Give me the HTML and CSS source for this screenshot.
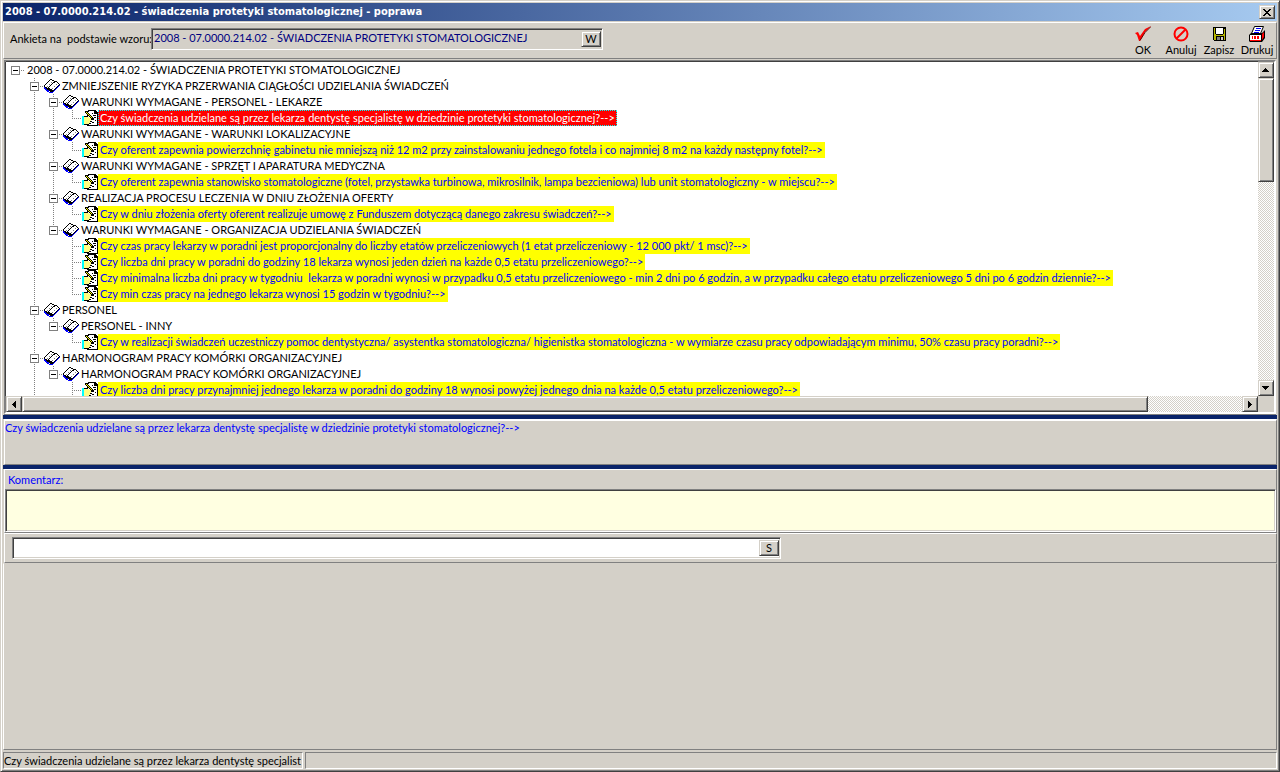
FILE: index.html
```html
<!DOCTYPE html>
<html lang="pl">
<head>
<meta charset="utf-8">
<title>2008 - 07.0000.214.02 - świadczenia protetyki stomatologicznej - poprawa</title>
<link rel="stylesheet" href="styles.css">
</head>
<body>
<svg class="sprites" aria-hidden="true">
  <symbol id="book" viewBox="0 0 16 16" shape-rendering="crispEdges">
    <path d="M0 9h1v1h1v1h1v1h2v2h3v-1h1v-1h1v-1h1v-1h1V9h1V8h1V7h2v1h-1v1h-1v1h-1v1h-1v1h-1v1h-1v1H9v1H5v-1H3v-1H2v-1H1v-1H0z" fill="#0000ff"/>
    <path d="M6 1h2v1h2v1h3v1h1v1h1v1h1v1h-1v1h-1v1h-1v1h-1v1h-1v1h-1v1H9v1H6v-1H5v-1H3v-1H2v-1H1V9H0V7h1V6h1V5h1V4h1V3h1V2h1z" fill="#000"/>
    <path d="M6 2h2v1h2v1H9v1H8v1H7v1H6v1H5v1H4v1H3V9H1V7h1V6h1V5h1V4h1V3h1zM11 4h2v1h1v1h1v1h-1v1h-1v1h-1v1h-1v1h-1v1H8v-1H6v-1H5v-1h1V8h1V7h1V6h1V5h2z" fill="#fff"/>
    <path d="M7 4h1v1H7zM5 6h1v1H5zM3 8h1v1H3zM12 6h1v1h-1zM10 8h1v1h-1zM8 10h1v1H8z" fill="#808080"/>
  </symbol>
  <symbol id="note" viewBox="0 0 16 16" shape-rendering="crispEdges">
    <path d="M6 0h8v1h1v1h1v14H5V1h1z" fill="#000"/>
    <path d="M7 1h5v3h3v11H6V2h1z" fill="#fff"/>
    <path d="M13 2h1v1h-1zM10 3h1v1h-1zM11 5h3v1h-3zM12 7h2v1h-2zM11 9h1v1h-1zM13 10h1v1h-1zM10 12h2v1h-2zM8 13h1v1H8z" fill="#000"/>
    <path d="M0 6h2v9H0z" fill="#00ffff"/>
    <path d="M2 7h5v1h2v4H8v2H2z" fill="#ffff80"/>
    <path d="M2 6h4v1H2zM9 9h2v1H9zM8 11h2v1H8zM7 13h2v1H7zM2 14h5v1H2z" fill="#000"/>
    <path d="M3 1h2v1h1v1h1v1h1v1h1v1h1v1h1v1h1v2h-2V9H9V8H8V7H7V6H6V5H5V4H4V3H3z" fill="#000"/>
    <path d="M4 2h1v1h1v1h1v1h1v1h1v1h1v1H9V7H8V6H7V5H6V4H5V3H4z" fill="#ffff00"/>
  </symbol>
</svg>

<main class="window">
  <header class="titlebar">
    <h1>2008 - 07.0000.214.02 - świadczenia protetyki stomatologicznej - poprawa</h1>
    <button class="btn close" aria-label="Zamknij"><svg width="8" height="7" viewBox="0 0 8 7" shape-rendering="crispEdges"><path d="M0 0h2v1h1v1h2V1h1V0h2v1H7v1H6v1H5v1h1v1h1v1h1v1H6V6H5V5H3v1H2v1H0V6h1V5h1V4h1V3H2V2H1V1H0z"/></svg></button>
  </header>

  <section class="toolbar">
    <label class="pattern-label" for="pattern">Ankieta na  podstawie wzoru:</label>
    <div class="field pattern">
      <input id="pattern" type="text" readonly value="2008 - 07.0000.214.02 - ŚWIADCZENIA PROTETYKI STOMATOLOGICZNEJ">
      <button class="btn">W</button>
    </div>
    <div class="actions">
      <button class="tool"><svg width="16" height="16" viewBox="0 0 16 16"><path d="M0 7l3-1 2 4 5-7 6-3-6 6-5 9H4L2 9z" fill="#f00"/><path d="M5 14.500l5-8 6-6" fill="none" stroke="#600" stroke-width="1"/></svg>OK</button>
      <button class="tool"><svg width="16" height="16" viewBox="0 0 16 16" fill="none" stroke="#f00" stroke-width="2"><circle cx="8" cy="8" r="6.500"/><path d="M3.500 12.500l9-9"/></svg>Anuluj</button>
      <button class="tool"><svg width="16" height="16" viewBox="0 0 16 16" shape-rendering="crispEdges"><path d="M2 1h13v14H3v-1H2z"/><path d="M3 2h11v12H3z" fill="#b8b800"/><path d="M5 2h7v6H5z" fill="#fff"/><path d="M12 2h1v6h-1zM4 2h1v6H4zM5 8h7v1H5zM13 2h1v1h-1z"/><path d="M5 10h8v5H5z"/><path d="M10 11h2v3h-2z" fill="#d4d0c8"/><path d="M6 11h3v3H6z" fill="#808080"/></svg>Zapisz</button>
      <button class="tool"><svg width="16" height="16" viewBox="0 0 16 16"><path d="M5.500.5h9l-3 7h-9z" fill="#fff" stroke="#000"/><path d="M7 2.500h5M6 4.500h5M5 6.500h5" stroke="#00f" stroke-width="1.200"/><path d="M0 9l2-2h11l3-3v8l-3 4H1l-1-1z"/><path d="M13 8l2-2v5l-2 3z" fill="#f00"/><path d="M1 9h11v5H1z" fill="#fff"/><path d="M3 10h1v3H3zM5 10h2v3H5zM8 10h2v3H8z" fill="#f00"/><path d="M1 14h11v1H1z" fill="#f00"/></svg>Drukuj</button>
    </div>
  </section>

  <section class="tree-box">
    <div class="tree-view">
      <ul class="tree">
        <li><div class="row"><button class="toggle" aria-label="Zwiń"></button><span class="label">2008 - 07.0000.214.02 - ŚWIADCZENIA PROTETYKI STOMATOLOGICZNEJ</span></div>
        <ul>
          <li><div class="row"><button class="toggle" aria-label="Zwiń"></button><svg class="icon"><use href="#book"/></svg><span class="label">ZMNIEJSZENIE RYZYKA PRZERWANIA CIĄGŁOŚCI UDZIELANIA ŚWIADCZEŃ</span></div>
          <ul>
            <li><div class="row"><button class="toggle" aria-label="Zwiń"></button><svg class="icon"><use href="#book"/></svg><span class="label">WARUNKI WYMAGANE - PERSONEL - LEKARZE</span></div>
              <ul><li><div class="row leaf"><svg class="icon"><use href="#note"/></svg><span class="label question selected">Czy świadczenia udzielane są przez lekarza dentystę specjalistę w dziedzinie protetyki stomatologicznej?--&gt;</span></div></li></ul></li>
            <li><div class="row"><button class="toggle" aria-label="Zwiń"></button><svg class="icon"><use href="#book"/></svg><span class="label">WARUNKI WYMAGANE - WARUNKI LOKALIZACYJNE</span></div>
              <ul><li><div class="row leaf"><svg class="icon"><use href="#note"/></svg><span class="label question">Czy oferent zapewnia powierzchnię gabinetu nie mniejszą niż 12 m2 przy zainstalowaniu jednego fotela i co najmniej 8 m2 na każdy następny fotel?--&gt;</span></div></li></ul></li>
            <li><div class="row"><button class="toggle" aria-label="Zwiń"></button><svg class="icon"><use href="#book"/></svg><span class="label">WARUNKI WYMAGANE - SPRZĘT I APARATURA MEDYCZNA</span></div>
              <ul><li><div class="row leaf"><svg class="icon"><use href="#note"/></svg><span class="label question">Czy oferent zapewnia stanowisko stomatologiczne (fotel, przystawka turbinowa, mikrosilnik, lampa bezcieniowa) lub unit stomatologiczny - w miejscu?--&gt;</span></div></li></ul></li>
            <li><div class="row"><button class="toggle" aria-label="Zwiń"></button><svg class="icon"><use href="#book"/></svg><span class="label">REALIZACJA PROCESU LECZENIA W DNIU ZŁOŻENIA OFERTY</span></div>
              <ul><li><div class="row leaf"><svg class="icon"><use href="#note"/></svg><span class="label question">Czy w dniu złożenia oferty oferent realizuje umowę z Funduszem dotyczącą danego zakresu świadczeń?--&gt;</span></div></li></ul></li>
            <li><div class="row"><button class="toggle" aria-label="Zwiń"></button><svg class="icon"><use href="#book"/></svg><span class="label">WARUNKI WYMAGANE - ORGANIZACJA UDZIELANIA ŚWIADCZEŃ</span></div>
              <ul>
                <li><div class="row leaf"><svg class="icon"><use href="#note"/></svg><span class="label question">Czy czas pracy lekarzy w poradni jest proporcjonalny do liczby etatów przeliczeniowych (1 etat przeliczeniowy - 12 000 pkt/ 1 msc)?--&gt;</span></div></li>
                <li><div class="row leaf"><svg class="icon"><use href="#note"/></svg><span class="label question">Czy liczba dni pracy w poradni do godziny 18 lekarza wynosi jeden dzień na każde 0,5 etatu przeliczeniowego?--&gt;</span></div></li>
                <li><div class="row leaf"><svg class="icon"><use href="#note"/></svg><span class="label question">Czy minimalna liczba dni pracy w tygodniu  lekarza w poradni wynosi w przypadku 0,5 etatu przeliczeniowego - min 2 dni po 6 godzin, a w przypadku całego etatu przeliczeniowego 5 dni po 6 godzin dziennie?--&gt;</span></div></li>
                <li><div class="row leaf"><svg class="icon"><use href="#note"/></svg><span class="label question">Czy min czas pracy na jednego lekarza wynosi 15 godzin w tygodniu?--&gt;</span></div></li>
              </ul></li>
          </ul></li>
          <li><div class="row"><button class="toggle" aria-label="Zwiń"></button><svg class="icon"><use href="#book"/></svg><span class="label">PERSONEL</span></div>
          <ul>
            <li><div class="row"><button class="toggle" aria-label="Zwiń"></button><svg class="icon"><use href="#book"/></svg><span class="label">PERSONEL - INNY</span></div>
              <ul><li><div class="row leaf"><svg class="icon"><use href="#note"/></svg><span class="label question">Czy w realizacji świadczeń uczestniczy pomoc dentystyczna/ asystentka stomatologiczna/ higienistka stomatologiczna - w wymiarze czasu pracy odpowiadającym minimu, 50% czasu pracy poradni?--&gt;</span></div></li></ul></li>
          </ul></li>
          <li class="continued"><div class="row"><button class="toggle" aria-label="Zwiń"></button><svg class="icon"><use href="#book"/></svg><span class="label">HARMONOGRAM PRACY KOMÓRKI ORGANIZACYJNEJ</span></div>
          <ul>
            <li><div class="row"><button class="toggle" aria-label="Zwiń"></button><svg class="icon"><use href="#book"/></svg><span class="label">HARMONOGRAM PRACY KOMÓRKI ORGANIZACYJNEJ</span></div>
              <ul><li class="continued"><div class="row leaf"><svg class="icon"><use href="#note"/></svg><span class="label question">Czy liczba dni pracy przynajmniej jednego lekarza w poradni do godziny 18 wynosi powyżej jednego dnia na każde 0,5 etatu przeliczeniowego?--&gt;</span></div></li></ul></li>
          </ul></li>
        </ul></li>
      </ul>
    </div>
    <div class="scrollbar vertical">
      <button class="btn" aria-label="W górę"><svg width="8" height="4" viewBox="0 0 8 4" shape-rendering="crispEdges"><path d="M3 0h1v1h1v1h1v1h1v1H0V3h1V2h1V1h1z"/></svg></button>
      <div class="btn thumb"></div>
      <div class="track"></div>
      <button class="btn" aria-label="W dół"><svg width="8" height="4" viewBox="0 0 8 4" shape-rendering="crispEdges"><path d="M0 0h7v1H6v1H5v1H4v1H3V3H2V2H1V1H0z"/></svg></button>
    </div>
    <div class="scrollbar horizontal">
      <button class="btn" aria-label="W lewo"><svg width="4" height="7" viewBox="0 0 4 7" shape-rendering="crispEdges"><path d="M4 0v7H3V6H2V5H1V4H0V3h1V2h1V1h1V0z"/></svg></button>
      <div class="btn thumb"></div>
      <div class="track"></div>
      <button class="btn" aria-label="W prawo"><svg width="4" height="7" viewBox="0 0 4 7" shape-rendering="crispEdges"><path d="M0 0h1v1h1v1h1v1h1v1H3v1H2v1H1v1H0z"/></svg></button>
    </div>
  </section>

  <div class="splitter"></div>
  <section class="panel preview">Czy świadczenia udzielane są przez lekarza dentystę specjalistę w dziedzinie protetyki stomatologicznej?--&gt;</section>
  <div class="splitter"></div>
  <section class="panel comment">
    <label for="comment">Komentarz:</label>
    <textarea id="comment"></textarea>
  </section>
  <section class="panel answer">
    <div class="field">
      <input type="text" aria-label="Odpowiedź">
      <button class="btn">S</button>
    </div>
  </section>
  <div class="blank"></div>
  <footer class="status">
    <div class="cell first">Czy świadczenia udzielane są przez lekarza dentystę specjalist</div>
    <div class="cell"></div>
  </footer>
</main>
</body>
</html>
```
FILE: styles.css
```css
:root {
  --face: #d4d0c8;
  --shade: #808080;
  --dark: #404040;
  --blue: #0000ff;
}

* { box-sizing: border-box; }

body {
  margin: 0;
  background: var(--face);
  color: #000;
  font: 11px/16px Lato, "Liberation Sans", sans-serif;
}

button, input, textarea {
  margin: 0;
  padding: 0;
  border: 0;
  border-radius: 0;
  outline: 0;
  color: inherit;
  font: inherit;
}

.sprites { position: absolute; width: 0; height: 0; }

.window {
  display: flex;
  flex-direction: column;
  min-height: 100vh;
  padding: 2px;
  border: 1px solid;
  border-color: var(--face) var(--dark) var(--dark) var(--face);
  box-shadow: inset 1px 1px #fff, inset -1px -1px var(--shade);
}

/* raised button face, shared by push buttons and scrollbar parts */
.btn {
  display: flex;
  align-items: center;
  justify-content: center;
  background: var(--face);
  border: 1px solid;
  border-color: var(--face) var(--dark) var(--dark) var(--face);
  box-shadow: inset 1px 1px #fff, inset -1px -1px var(--shade);
}

.titlebar {
  display: flex;
  align-items: center;
  justify-content: space-between;
  height: 18px;
  padding: 0 2px;
  background: linear-gradient(to right, #0a246a, #a6caf0);
}

.titlebar h1 {
  margin: 0;
  color: #fff;
  font: bold 11px/18px "DejaVu Sans Condensed", "DejaVu Sans", sans-serif;
}

.close { width: 16px; height: 14px; }

.toolbar {
  display: flex;
  align-items: flex-start;
  margin-top: 1px;
  height: 37px;
  padding: 0 0 0 6px;
  border: 1px solid;
  border-color: #fff var(--shade) var(--shade) #fff;
}

.pattern-label {
  width: 141px;
  padding-top: 8px;
  white-space: pre;
}

.field {
  display: flex;
  background: #fff;
  border: 1px solid;
  border-color: var(--shade) #fff #fff var(--shade);
  box-shadow: inset 1px 1px var(--dark), inset -1px -1px var(--face);
  padding: 2px 1px 2px 2px;
}

.field input { flex: 1; min-width: 0; background: transparent; }
.field .btn { width: 20px; }

.pattern {
  width: 452px;
  height: 22px;
  margin-top: 5px;
  background: var(--face);
}

.pattern input { color: #000080; padding-bottom: 2px; }

.actions { display: flex; margin-left: auto; padding-top: 3px; }

.tool {
  display: flex;
  flex-direction: column;
  align-items: center;
  width: 38px;
  background: none;
}

.tree-box {
  display: grid;
  grid-template: 1fr 16px / minmax(0, 1fr) 16px;
  height: 354px;
  margin: 1px 1px 0;
  border: 2px solid;
  border-color: var(--shade) #fff #fff var(--shade);
  background: var(--face);
  box-shadow: 0 1px var(--shade);
}

.tree-view {
  overflow: hidden;
  background: #fff;
  box-shadow: 0 -1px var(--dark), -1px 0 var(--dark);
}

.tree, .tree ul { margin: 0; padding: 0; list-style: none; }
.tree ul { padding-left: 19px; }

/* dotted connector that runs down the middle of the 19px toggle column */
.tree ul > li {
  background: repeating-linear-gradient(to bottom, var(--shade) 0 1px, transparent 1px 2px) 9px 0 / 1px 100% no-repeat;
}
.tree ul > li:last-child:not(.continued) { background-size: 1px 8px; }

.row { display: flex; height: 16px; white-space: pre; }

.row::before {
  content: "";
  order: 1;
  width: 4px;
  height: 1px;
  margin: 8px 0 0 0;
  background: repeating-linear-gradient(to right, var(--shade) 0 1px, transparent 1px 2px);
}
.row.leaf::before { order: 0; width: 10px; margin-left: 9px; }
.row .icon, .row .label { order: 2; }

.toggle {
  width: 9px;
  height: 9px;
  margin: 4px 1px 0 5px;
  border: 1px solid var(--shade);
  background: linear-gradient(#000, #000) center / 5px 1px no-repeat #fff;
}

.icon { width: 16px; height: 16px; }
.label { padding: 0 2px; }

.question { background: #ffff00; color: var(--blue); }

.selected {
  background: #ff0000;
  color: #fff;
  outline: 1px dotted #00ffff;
  outline-offset: -1px;
}

.scrollbar { display: flex; }
.vertical { flex-direction: column; }
.scrollbar button { flex: 0 0 16px; }
.vertical .thumb { flex: 0 0 104px; }
.horizontal .thumb { flex: 0 1 1126px; }
.track {
  flex: 1 0 0;
  background: repeating-conic-gradient(#fff 0 25%, var(--face) 0 50%) 0 0 / 2px 2px;
}

.splitter { height: 4px; background: #0a246a; margin-top: 1px; }

.panel {
  border: 1px solid;
  border-color: #fff var(--shade) var(--shade) #fff;
  margin-left: 1px;
}

.preview {
  height: 46px;
  border-top-width: 2px;
  color: var(--blue);
  line-height: 14px;
  margin-bottom: -1px;
}

.comment {
  display: flex;
  flex-direction: column;
  height: 64px;
}
.comment label { padding: 2px 0 1px 3px; color: var(--blue); }
.comment textarea {
  flex: 1;
  resize: none;
  background: #ffffe1;
  border: 1px solid;
  border-color: var(--shade) #fff #fff var(--shade);
  box-shadow: inset 1px 1px var(--dark), inset -1px -1px var(--face);
}

.answer { height: 30px; padding: 3px 7px; }
.answer .field { width: 769px; height: 22px; }

.blank {
  flex: 1;
  border: 1px solid;
  border-color: transparent var(--shade) var(--shade) #fff;
}

.status { display: flex; gap: 2px; margin-top: 2px; line-height: 15px; }
.cell {
  flex: 1;
  height: 17px;
  overflow: hidden;
  white-space: nowrap;
  border: 1px solid;
  border-color: var(--shade) #fff #fff var(--shade);
}
.cell.first { flex: 0 0 300px; }
```
